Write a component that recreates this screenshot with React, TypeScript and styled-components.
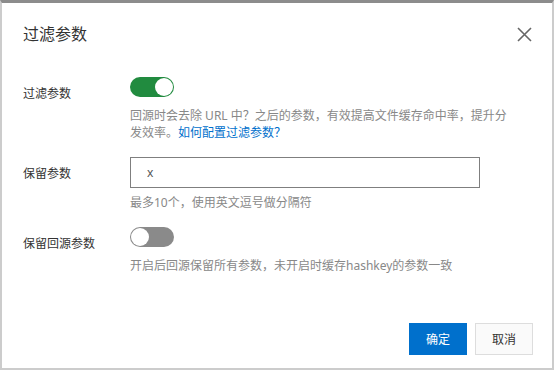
import React from 'react';
import styled, { createGlobalStyle } from 'styled-components';

const GlobalStyle = createGlobalStyle`
  html, body {
    margin: 0;
    padding: 0;
    background: #ffffff;
  }
  * {
    box-sizing: border-box;
  }
`;

const Dialog = styled.div`
  width: 554px;
  height: 370px;
  display: flex;
  flex-direction: column;
  background: #ffffff;
  border-top: 3px solid #8c8c8c;
  border-left: 2px solid #cccccc;
  border-right: 2px solid #cccccc;
  border-bottom: 2px solid #cccccc;
  font-family: "Noto Sans", "Noto Sans CJK SC", sans-serif;
  color: #333333;
`;

const Header = styled.div`
  display: flex;
  align-items: center;
  justify-content: space-between;
  padding: 20px 20px 0 21px;
`;

const Title = styled.h2`
  margin: 0;
  font-size: 16px;
  line-height: 22px;
  font-weight: 400;
  color: #333333;
`;

const CloseButton = styled.button`
  width: 16px;
  height: 16px;
  padding: 0;
  border: none;
  background: transparent;
  display: flex;
  align-items: center;
  justify-content: center;
  cursor: pointer;
`;

const Form = styled.div`
  display: grid;
  grid-template-columns: 107px 1fr;
  row-gap: 16px;
  padding: 32px 0 0 21px;
`;

const Label = styled.div`
  font-size: 12px;
  line-height: 32px;
  margin-top: 1px;
  color: #333333;
`;

const Field = styled.div`
  display: flex;
  flex-direction: column;
  align-items: flex-start;
`;

const Switch = styled.button<{ on: boolean }>`
  position: relative;
  width: 44px;
  height: 20px;
  padding: 0;
  border: none;
  border-radius: 10px;
  background: ${p => (p.on ? '#218b3f' : '#8a8a8a')};
  cursor: pointer;

  &::after {
    content: '';
    position: absolute;
    top: 1px;
    left: ${p => (p.on ? '25px' : '1px')};
    width: 18px;
    height: 18px;
    border-radius: 50%;
    background: #ffffff;
  }
`;

const Help = styled.div<{ gap: number }>`
  margin-top: ${p => p.gap}px;
  max-width: 384px;
  font-size: 12px;
  line-height: 17px;
  color: #888888;
`;

const Link = styled.a`
  color: #0070cc;
  text-decoration: none;
`;

const TextInput = styled.input`
  width: 350px;
  height: 31px;
  padding: 0 16px;
  border: 1px solid #7f7f7f;
  border-radius: 0;
  outline: none;
  font-family: inherit;
  font-size: 12px;
  color: #555555;
`;

const Footer = styled.div`
  margin-top: auto;
  display: flex;
  justify-content: flex-end;
  gap: 8px;
  padding: 0 19px 13px 0;
`;

const Button = styled.button<{ primary?: boolean }>`
  width: 58px;
  height: 32px;
  font-family: inherit;
  font-size: 12px;
  border: 1px solid ${p => (p.primary ? '#0070cc' : '#dddddd')};
  background: ${p => (p.primary ? '#0070cc' : '#fafafa')};
  color: ${p => (p.primary ? '#ffffff' : '#333333')};
  cursor: pointer;
`;

export default function App() {
  return (
    <>
      <GlobalStyle />
      <Dialog>
        <Header>
          <Title>过滤参数</Title>
          <CloseButton aria-label="关闭">
            <svg width="15" height="15" viewBox="0 0 15 15">
              <path d="M1 1 L14 14 M14 1 L1 14" stroke="#666666" strokeWidth="1.6" fill="none" />
            </svg>
          </CloseButton>
        </Header>

        <Form>
          <Label>过滤参数</Label>
          <Field>
            <Switch on />
            <Help gap={10}>
              回源时会去除 URL 中？之后的参数，有效提高文件缓存命中率，提升分发效率。
              <Link href="#">如何配置过滤参数？</Link>
            </Help>
          </Field>

          <Label>保留参数</Label>
          <Field>
            <TextInput defaultValue="x" />
            <Help gap={6}>最多10个，使用英文逗号做分隔符</Help>
          </Field>

          <Label>保留回源参数</Label>
          <Field>
            <Switch on={false} />
            <Help gap={10}>开启后回源保留所有参数，未开启时缓存hashkey的参数一致</Help>
          </Field>
        </Form>

        <Footer>
          <Button primary>确定</Button>
          <Button>取消</Button>
        </Footer>
      </Dialog>
    </>
  );
}
